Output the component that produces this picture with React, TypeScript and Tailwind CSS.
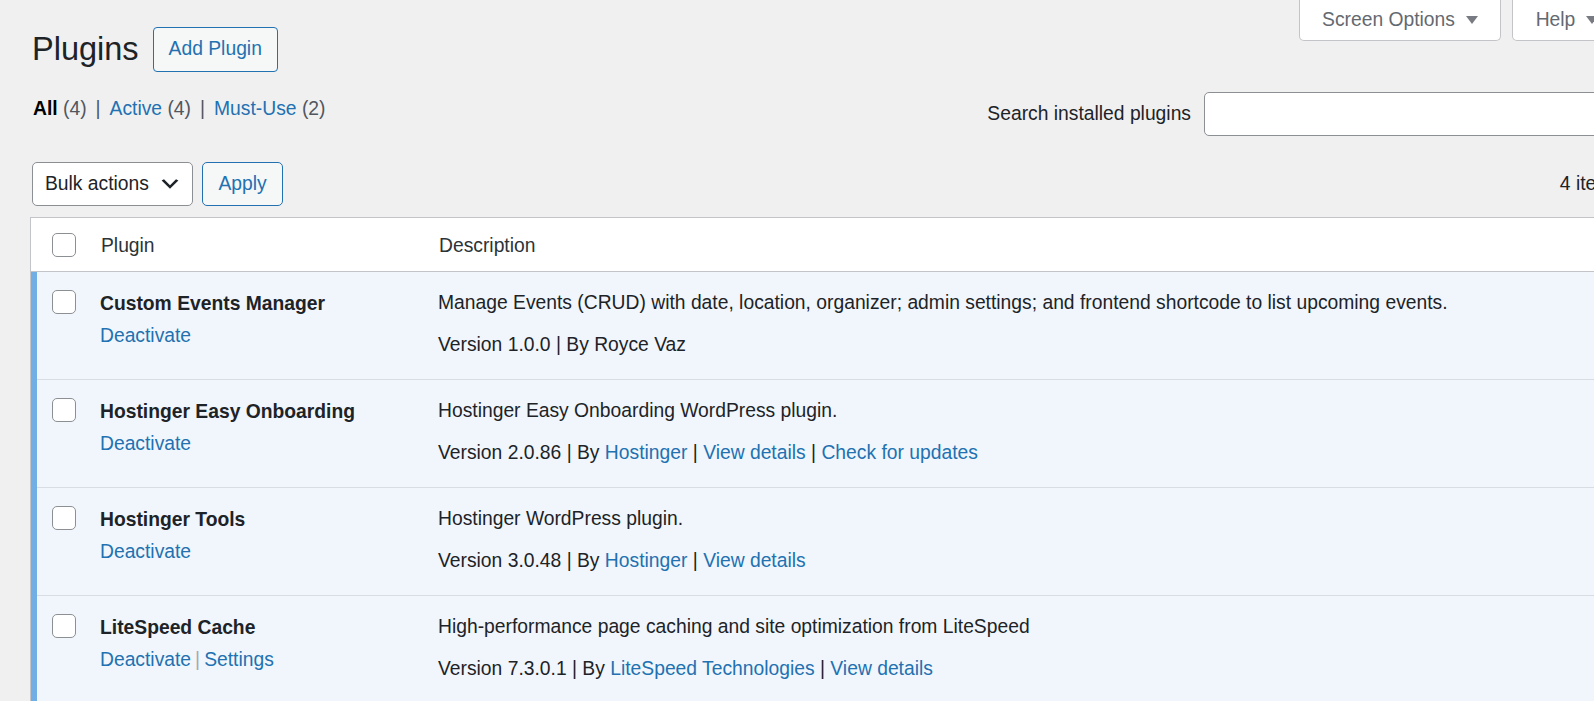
import React from 'react';

type Part = { text: string; link?: boolean };

const plugins: { name: string; actions: string[]; desc: string; meta: Part[] }[] = [
  {
    name: 'Custom Events Manager',
    actions: ['Deactivate'],
    desc: 'Manage Events (CRUD) with date, location, organizer; admin settings; and frontend shortcode to list upcoming events.',
    meta: [{ text: 'Version 1.0.0 | By Royce Vaz' }],
  },
  {
    name: 'Hostinger Easy Onboarding',
    actions: ['Deactivate'],
    desc: 'Hostinger Easy Onboarding WordPress plugin.',
    meta: [
      { text: 'Version 2.0.86 | By ' },
      { text: 'Hostinger', link: true },
      { text: ' | ' },
      { text: 'View details', link: true },
      { text: ' | ' },
      { text: 'Check for updates', link: true },
    ],
  },
  {
    name: 'Hostinger Tools',
    actions: ['Deactivate'],
    desc: 'Hostinger WordPress plugin.',
    meta: [
      { text: 'Version 3.0.48 | By ' },
      { text: 'Hostinger', link: true },
      { text: ' | ' },
      { text: 'View details', link: true },
    ],
  },
  {
    name: 'LiteSpeed Cache',
    actions: ['Deactivate', 'Settings'],
    desc: 'High-performance page caching and site optimization from LiteSpeed',
    meta: [
      { text: 'Version 7.3.0.1 | By ' },
      { text: 'LiteSpeed Technologies', link: true },
      { text: ' | ' },
      { text: 'View details', link: true },
    ],
  },
];

function Checkbox() {
  return <div className="w-[24px] h-[24px] rounded-[5px] border border-[#8c8f94] bg-white" />;
}

function Triangle() {
  return (
    <svg width="12" height="10" viewBox="0 0 12 10" className="ml-[11px]">
      <path d="M0 1h12L6 9z" fill="#787c82" />
    </svg>
  );
}

export default function App() {
  return (
    <div className="w-[1594px] h-[701px] overflow-hidden bg-[#f0f0f1] font-['Liberation_Sans',Arial,sans-serif] text-[19.3px] text-[#1d2327]">
      <div className="w-[1652px] pl-[30px] pr-[30px]">
        {/* title + screen meta tabs */}
        <div className="flex justify-between items-start">
          <div className="flex items-center pt-[27px] pl-[2px]">
            <h1 className="text-[32.5px] leading-[45px] font-normal">Plugins</h1>
            <button className="ml-[14px] h-[45px] px-[15px] border border-[#2271b1] rounded-[4px] bg-[#f6f7f7] text-[#2271b1] text-[19.3px]">
              Add Plugin
            </button>
          </div>
          <div className="flex gap-[11px]">
            <div className="w-[202px] h-[41px] flex items-center justify-center bg-white border border-t-0 border-[#c3c4c7] rounded-b-[5px] text-[#646970]">
              Screen Options
              <Triangle />
            </div>
            <div className="w-[110px] h-[41px] flex items-center justify-center bg-white border border-t-0 border-[#c3c4c7] rounded-b-[5px] text-[#646970]">
              Help
              <Triangle />
            </div>
          </div>
        </div>

        {/* filters + search */}
        <div className="flex justify-between items-start mt-[20px]">
          <div className="pt-[2px] pl-[3px] leading-[29px] text-[#50575e]">
            <span className="font-bold text-black">All</span> (4)
            <span className="mx-[9px]">|</span>
            <span className="text-[#2271b1]">Active</span> (4)
            <span className="mx-[9px]">|</span>
            <span className="text-[#2271b1]">Must-Use</span> (2)
          </div>
          <div className="flex items-center">
            <span className="mr-[13px]">Search installed plugins</span>
            <div className="w-[418px] h-[44px] bg-white border border-[#8c8f94] rounded-[5px]" />
          </div>
        </div>

        {/* tablenav */}
        <div className="flex justify-between items-center mt-[26px] pl-[2px]">
          <div className="flex items-center gap-[9px]">
            <div className="w-[161px] h-[44px] flex items-center justify-between pl-[12px] pr-[10px] bg-white border border-[#8c8f94] rounded-[5px]">
              <span>Bulk actions</span>
              <svg width="24" height="24" viewBox="0 0 20 20">
                <path d="M5 6l5 5 5-5 2 1-7 7-7-7 2-1z" fill="#1d2327" />
              </svg>
            </div>
            <button className="w-[81px] h-[44px] border border-[#2271b1] rounded-[5px] bg-[#f6f7f7] text-[#2271b1] text-[19.3px]">
              Apply
            </button>
          </div>
          <span className="text-[#1d2327]">4 items</span>
        </div>

        {/* table */}
        <div className="mt-[11px] border border-[#c3c4c7] bg-white">
          <div className="grid grid-cols-[54px_338px_1fr] h-[54px] items-center border-b border-[#c3c4c7] text-[#2c3338]">
            <div className="pl-[21px]">
              <Checkbox />
            </div>
            <div className="pl-[16px] pt-[3px]">Plugin</div>
            <div className="pl-[16px] pt-[3px]">Description</div>
          </div>
          {plugins.map((p) => (
            <div
              key={p.name}
              className="grid grid-cols-[54px_338px_1fr] h-[108px] bg-[#f0f6fc] shadow-[inset_6px_0_0_#72aee6,inset_0_-1px_0_#d8dde3]"
            >
              <div className="pl-[21px] pt-[18px]">
                <Checkbox />
              </div>
              <div className="pl-[15px] pt-[17px]">
                <div className="font-bold leading-[29px]">{p.name}</div>
                <div className="mt-[3px] leading-[29px] text-[#2271b1]">
                  {p.actions.map((a, i) => (
                    <span key={a}>
                      {i > 0 && <span className="text-[#a7aaad] mx-[4px]">|</span>}
                      {a}
                    </span>
                  ))}
                </div>
              </div>
              <div className="pl-[15px] pt-[16px]">
                <div className="leading-[29px]">{p.desc}</div>
                <div className="mt-[13px] leading-[29px]">
                  {p.meta.map((m, i) => (
                    <span key={i} className={m.link ? 'text-[#2271b1]' : ''}>
                      {m.text}
                    </span>
                  ))}
                </div>
              </div>
            </div>
          ))}
        </div>
      </div>
    </div>
  );
}
